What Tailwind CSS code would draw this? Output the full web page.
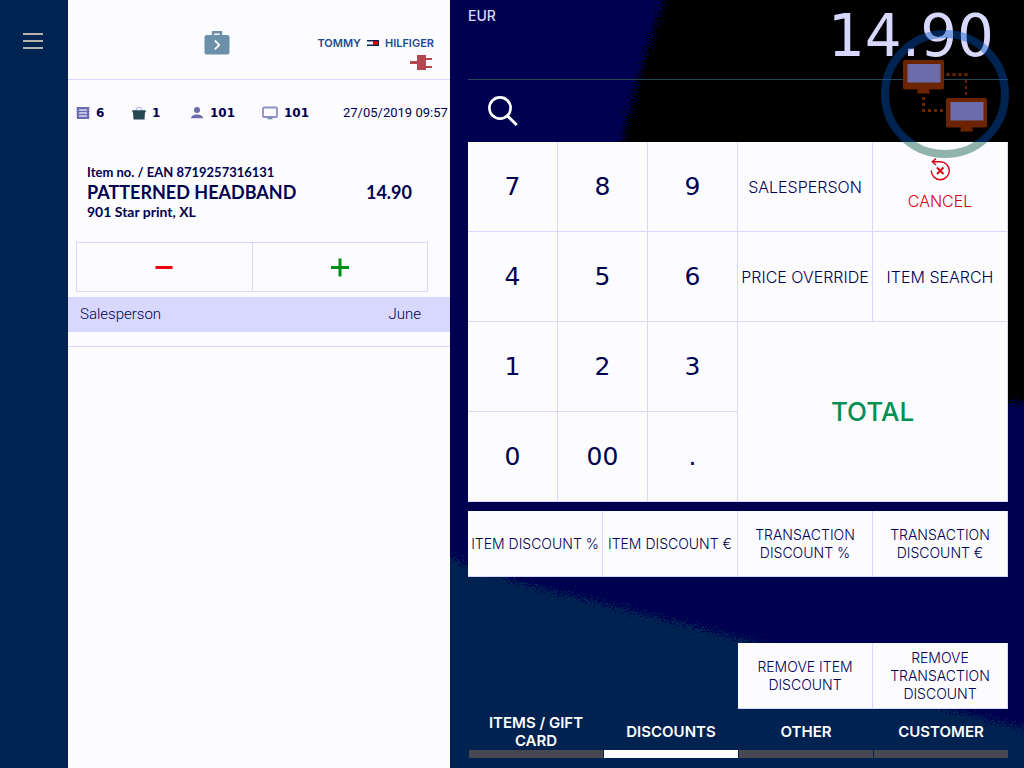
<!DOCTYPE html>
<html lang="en">
<head>
<meta charset="utf-8">
<meta name="viewport" content="width=device-width, initial-scale=1">
<title>Point of sale</title>
<script src="https://cdn.jsdelivr.net/npm/@tailwindcss/browser@4"></script>
</head>
<body class="grid min-h-screen grid-cols-[68px_minmax(0,382fr)_minmax(0,574fr)] bg-[#002451] font-['Inter','Liberation_Sans',sans-serif] text-[#000051]">

<nav class="bg-[#002451] pt-[33px] pl-[23px]" aria-label="Main">
  <button type="button" aria-label="Menu" class="flex w-5 flex-col gap-[5px]">
    <span class="h-0.5 w-full bg-[#b4b4aa]"></span>
    <span class="h-0.5 w-full bg-[#b4b4aa]"></span>
    <span class="h-0.5 w-full bg-[#b4b4aa]"></span>
  </button>
</nav>

<section class="flex flex-col bg-[#fcfcff]" aria-label="Receipt">
  <header class="grid h-20 grid-cols-[2fr_26px_3fr] border-b border-[#d8d8ff] pr-4">
    <span></span>
    <svg class="mt-[30px] h-[25px] w-[26px]" viewBox="0 0 26 25" fill="none" role="img" aria-label="Session">
      <path d="M9 5.5V2.2h8v3.3" stroke="#6c90aa" stroke-width="2.4"/>
      <rect x=".5" y="5" width="25" height="19.5" rx="2" fill="#6c90aa"/>
      <path d="M10.8 10.5l4.400 4.400-4.400 4.400" stroke="#fcfcff" stroke-width="1.800"/>
    </svg>
    <div class="flex flex-col items-end pt-9">
      <div class="flex items-center gap-1.5 text-[11px] leading-[14px] font-semibold text-[#244890]">
        <span>TOMMY</span>
        <svg class="h-1.5 w-3" viewBox="0 0 12 6" aria-hidden="true"><path d="M0 0h12v6H0z" fill="#002451"/><path d="M0 1.500h6v3H0z" fill="#fcfcff"/><path d="M6 1.200h5v3.600H6z" fill="#e00000"/></svg>
        <span>HILFIGER</span>
      </div>
      <svg class="mt-[5px] mr-0.5 h-[15px] w-[22px]" viewBox="0 0 22 15" fill="#b44851" role="img" aria-label="Disconnected"><path d="M0 6h7V0h9v3h6v2h-6v6h6v2h-6v2H7V9H0z"/></svg>
    </div>
  </header>

  <div class="grid grid-cols-[56px_58px_72px_81px_auto] items-center pt-[23px] pl-2 font-['DejaVu_Sans','Noto_Sans',sans-serif] text-[12px] leading-5 font-bold">
    <span class="flex items-center gap-1.5">
      <svg class="h-3.5 w-3.5" viewBox="0 0 14 14" aria-hidden="true"><path d="M1 1h12v12H1z" fill="#6c6caa"/><path d="M.5 1v12M13.500 1v12" stroke="#b4b4ff" stroke-dasharray="1 1"/><path d="M3 4h8M3 7h8M3 10h8" stroke="#d8d8ff" stroke-width="1.400"/></svg>6</span>
    <span class="flex items-center gap-1.5">
      <svg class="h-3.5 w-3.5" viewBox="0 0 14 14" aria-hidden="true"><path d="M3.500 5l2-3.500h3L10.500 5" fill="none" stroke="#b4b4ff" stroke-width="1.200"/><path d="M.3 4.300h13.400v2H13L12.500 13.500h-11L1 6.300H.3z" fill="#244851"/></svg>1</span>
    <span class="flex items-center gap-1.5">
      <svg class="h-3.5 w-3.5" viewBox="0 0 14 14" fill="#6c6caa" aria-hidden="true"><circle cx="7" cy="4" r="3"/><path d="M1 12.300c0-5.200 12-5.200 12 0z"/></svg>101</span>
    <span class="flex items-center gap-1.5">
      <svg class="h-3.5 w-4" viewBox="0 0 16 14" aria-hidden="true"><rect x="1" y="1.500" width="14" height="9.500" rx="1" fill="#fcfcff" stroke="#9090c8" stroke-width="1.800"/><path d="M5.500 11.500h5V13.300h-5z" fill="#6c90aa"/></svg>101</span>
    <time datetime="2019-05-27T09:57" class="font-['Roboto','Liberation_Sans',sans-serif] text-[13px] font-normal whitespace-nowrap">27/05/2019 09:57</time>
  </div>

  <div class="mt-[39px] pr-[38px] pl-[19px] font-['Lato',sans-serif] font-bold">
    <p class="text-[13px] leading-5">Item no. / EAN 8719257316131</p>
    <p class="flex justify-between text-[18px] leading-5"><span>PATTERNED HEADBAND</span><span>14.90</span></p>
    <p class="text-[14px] leading-5">901 Star print, XL</p>
  </div>

  <div class="mt-5 mr-[22px] ml-2 flex h-[50px] border border-[#d8d8ff]">
    <button type="button" aria-label="Decrease quantity" class="flex flex-1 items-center justify-center border-r border-[#d8d8ff]">
      <svg class="h-5 w-5" viewBox="0 0 20 20" aria-hidden="true"><path d="M1.500 10.500h17" stroke="#f00010" stroke-width="3"/></svg>
    </button>
    <button type="button" aria-label="Increase quantity" class="flex flex-1 items-center justify-center">
      <svg class="h-5 w-5" viewBox="0 0 20 20" aria-hidden="true"><path d="M1 10.500h18M10 1.500v18" stroke="#009018" stroke-width="3"/></svg>
    </button>
  </div>

  <div class="mt-[5px] flex h-[35px] items-center justify-between bg-[#d8d8ff] pr-[29px] pl-3 font-['Roboto',sans-serif] text-[15px] font-light"><span>Salesperson</span><span>June</span></div>
  <hr class="mt-3.5 border-[#d8d8ff]">
</section>

<main class="relative isolate flex flex-col overflow-hidden bg-[#000051] pr-4 pb-2.5 pl-[18px]">
  <!-- Grainy diagonal shading behind the keypad -->
  <svg class="absolute inset-0 -z-10 h-full w-full" viewBox="0 0 574 768" preserveAspectRatio="none" aria-hidden="true">
    <defs>
      <filter id="grain" x="-5%" y="-5%" width="110%" height="110%">
        <feTurbulence type="fractalNoise" baseFrequency="0.9" numOctaves="2" seed="4" result="n"/>
        <feDisplacementMap in="SourceGraphic" in2="n" scale="30" xChannelSelector="R" yChannelSelector="G"/>
      </filter>
    </defs>
    <g filter="url(#grain)">
      <path d="M220-20L214 0Q187 76 172 142Q220 400 574 402H620V-20z" fill="#000"/>
      <path d="M-30 548L0 558L67 582L167 607L250 628L300 641L500 710L574 728L620 740V820H-30z" fill="#002451"/>
    </g>
  </svg>

  <header class="flex h-20 justify-between border-b border-[#244851]">
    <span class="pt-1.5 text-[14px] leading-5 font-medium text-[#d8d8ff]">EUR</span>
    <output class="pt-1 pr-[14px] font-['DejaVu_Sans',sans-serif] text-[58px] leading-[64px] text-[#d8d8ff]">14.90</output>
  </header>

  <div class="flex h-[62px] items-center pl-5">
    <button type="button" aria-label="Search">
      <svg class="block h-[30px] w-[30px]" viewBox="0 0 30 30" fill="none" stroke="#fff" stroke-width="2.600" aria-hidden="true"><circle cx="12" cy="12" r="10.600"/><path d="M19.500 20l9.300 9" stroke-width="3"/></svg>
    </button>
  </div>

  <div class="grid grid-cols-[2fr_2fr_2fr_3fr_3fr] auto-rows-[90px] bg-[#fcfcff] font-['DejaVu_Sans',sans-serif] text-[25px] *:border-r *:border-b *:border-[#d8d8ff]">
    <button type="button">7</button>
    <button type="button">8</button>
    <button type="button">9</button>
    <button type="button" class="font-['Inter',sans-serif] text-[16px] font-light whitespace-nowrap">SALESPERSON</button>
    <button type="button" class="flex flex-col items-center justify-end pb-5 font-['Inter',sans-serif] text-[16px] leading-5 font-light text-[#d80010]">
      <svg class="mb-2.5 h-[23px] w-5" viewBox="0 0 20 23" fill="none" stroke="#d80010" stroke-width="1.400" aria-hidden="true"><path d="M1.300 12.500A9 9 0 1 0 10 3.700H2.500M6 .5L2.300 3.700L6 7"/><path d="M7 9.500l6.500 6.500M13.500 9.500L7 16" stroke-width="1.900"/></svg>
      CANCEL</button>
    <button type="button">4</button>
    <button type="button">5</button>
    <button type="button">6</button>
    <button type="button" class="font-['Inter',sans-serif] text-[16px] font-light whitespace-nowrap">PRICE OVERRIDE</button>
    <button type="button" class="font-['Inter',sans-serif] text-[16px] font-light whitespace-nowrap">ITEM SEARCH</button>
    <button type="button">1</button>
    <button type="button">2</button>
    <button type="button">3</button>
    <button type="button" class="col-span-2 row-span-2 font-['Inter',sans-serif] text-[26px] font-medium text-[#009051]">TOTAL</button>
    <button type="button">0</button>
    <button type="button">00</button>
    <button type="button">.</button>
  </div>

  <div class="mt-[9px] grid grid-cols-4 auto-rows-[66px] bg-[#fcfcff] text-[14px] leading-[18px] font-light *:border-r *:border-b *:border-[#d8d8ff]">
    <button type="button" class="whitespace-nowrap">ITEM DISCOUNT %</button>
    <button type="button" class="whitespace-nowrap">ITEM DISCOUNT €</button>
    <button type="button">TRANSACTION<br>DISCOUNT %</button>
    <button type="button">TRANSACTION<br>DISCOUNT €</button>
  </div>

  <div class="mt-auto grid w-1/2 grid-cols-2 auto-rows-[66px] self-end bg-[#fcfcff] text-[14px] leading-[18px] font-light *:border-r *:border-b *:border-[#d8d8ff]">
    <button type="button">REMOVE ITEM<br>DISCOUNT</button>
    <button type="button">REMOVE<br>TRANSACTION<br>DISCOUNT</button>
  </div>

  <nav class="grid h-[49px] grid-cols-4 gap-px pl-px text-[15px] leading-[18px] font-semibold text-white *:border-b-8 *:border-[#484851]" aria-label="Function groups">
    <button type="button" class="pt-1">ITEMS / GIFT<br>CARD</button>
    <button type="button" class="border-white! pt-1" aria-current="page">DISCOUNTS</button>
    <button type="button" class="pt-1">OTHER</button>
    <button type="button" class="pt-1">CUSTOMER</button>
  </nav>

  <!-- Network status badge -->
  <svg class="pointer-events-none absolute top-[30px] right-[15px] h-32 w-32" viewBox="0 0 128 128" fill="none" role="img" aria-label="Network status">
    <defs>
      <clipPath id="upper"><path d="M0 0h128v112H0z"/></clipPath>
      <clipPath id="lower"><path d="M0 112h128v16H0z"/></clipPath>
    </defs>
    <circle cx="64" cy="64" r="60" stroke="#0054bc" stroke-opacity=".43" stroke-width="8" clip-path="url(#upper)"/>
    <circle cx="64" cy="64" r="60" stroke="#90b4aa" stroke-width="8" clip-path="url(#lower)"/>
    <path d="M65.500 44.500H87M42.500 67v12" stroke="#6c2400" stroke-width="3" stroke-dasharray="3 3"/>
    <path d="M85 50v18" stroke="#6c2400" stroke-width="2" stroke-dasharray="3 3"/>
    <path d="M41 80.500h22" stroke="#6c2400" stroke-width="3" stroke-dasharray="3 3"/>
    <g id="pc">
      <path d="M24 30h37q2 0 2 2v25.500q0 2-2 2H48l1 4H36l1-4H24q-2 0-2-2V32q0-2 2-2z" fill="#6c2400"/>
      <path d="M26.500 34h33v18.500h-33z" fill="#6c6caa"/>
    </g>
    <use href="#pc" x="43" y="38"/>
  </svg>
</main>
</body>
</html>
